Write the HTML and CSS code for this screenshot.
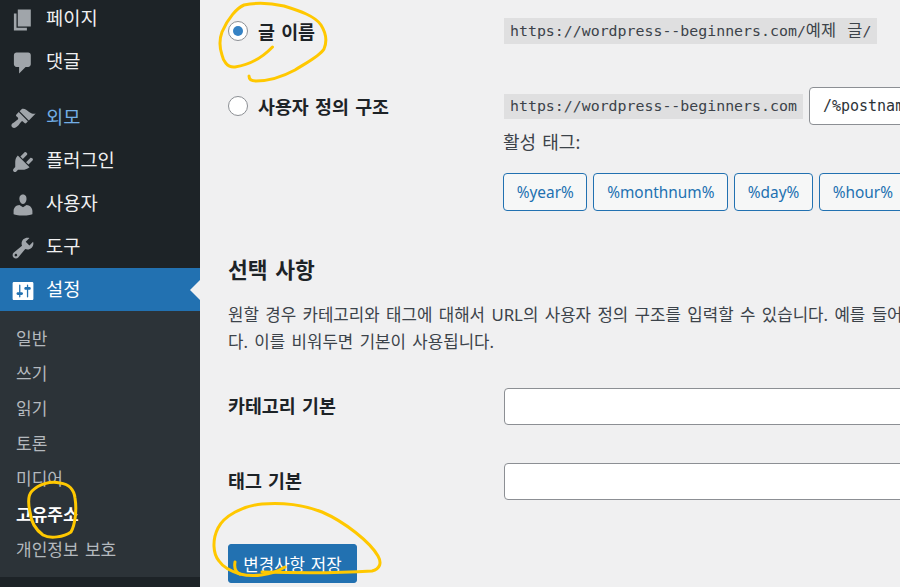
FILE: index.html
```html
<!DOCTYPE html>
<html lang="ko">
<head>
<meta charset="utf-8">
<title>고유주소 설정</title>
<link rel="stylesheet" href="styles.css">
</head>
<body>
<div class="page">
  <nav class="sidebar">
    <ul class="menu">
      <li class="item"><svg class="icon" viewBox="0 0 20 20"><path d="M6 15V2h10v13H6zm-1 1h8v2H3V5h2v11z"/></svg>페이지</li>
      <li class="item"><svg class="icon" viewBox="0 0 20 20"><path d="M5 2h9c1.1 0 2 .9 2 2v7c0 1.1-.9 2-2 2h-2l-5 5v-5H5c-1.100 0-2-.9-2-2V4c0-1.100.9-2 2-2z"/></svg>댓글</li>
      <li class="item item-gap item-hover"><svg class="icon" viewBox="0 0 20 20"><path d="M14.48 11.06L7.41 3.99l1.5-1.5c.5-.56 2.3-.47 3.51.32 1.21.8 1.43 1.28 2.91 2.1 1.18.64 2.45 1.26 4.45.85zm-.71.71L6.7 4.7 4.93 6.47c-.39.39-.39 1.02 0 1.41l1.06 1.06c.39.39.39 1.03 0 1.42-.6.6-1.43 1.11-2.21 1.69-.35.26-.7.53-1.01.84C1.43 13.23.4 14.98 1.72 16.3c1.33 1.33 3.08.3 4.41-1.05.31-.31.58-.66.84-1.01.58-.78 1.09-1.61 1.69-2.21.39-.39 1.03-.39 1.42 0l1.06 1.06c.39.39 1.02.39 1.41 0z"/></svg>외모</li>
      <li class="item"><svg class="icon" viewBox="0 0 20 20"><path d="M13.11 4.36L9.87 7.6 8 5.73l3.24-3.24c.35-.34 1.05-.2 1.56.32.52.51.66 1.21.31 1.55zm-8 1.77l.91-1.12 9.01 9.01-1.19.84c-.71.71-2.63 1.16-3.82 1.16H6.14L4.9 17.26c-.59.59-1.54.59-2.12 0-.59-.58-.59-1.53 0-2.12l1.24-1.24v-3.88c0-1.13.4-3.19 1.09-3.89zm7.26 3.97l3.24-3.24c.34-.35 1.04-.2 1.55.31.52.52.66 1.22.32 1.57l-3.24 3.24z"/></svg>플러그인</li>
      <li class="item"><svg class="icon" viewBox="0 0 20 20"><path d="M10 9.25c-2.27 0-2.73-3.44-2.73-3.44C7 4.02 7.82 2 9.97 2c2.16 0 2.98 2.02 2.71 3.81 0 0-.41 3.44-2.68 3.44zm0 2.57L12.72 10c2.39 0 4.52 2.33 4.52 4.53v2.49s-3.65 1.13-7.24 1.13c-3.65 0-7.24-1.13-7.24-1.13v-2.49c0-2.25 1.94-4.48 4.47-4.48z"/></svg>사용자</li>
      <li class="item"><svg class="icon" viewBox="0 0 20 20"><path d="M16.68 9.77c-1.34 1.34-3.3 1.67-4.95.99l-5.41 6.52c-.99.99-2.59.99-3.58 0s-.99-2.59 0-3.57l6.52-5.42c-.68-1.65-.35-3.61.99-4.95 1.28-1.28 3.12-1.62 4.72-1.06l-2.89 2.89 2.82 2.82 2.86-2.87c.53 1.58.18 3.39-1.08 4.65zM3.81 16.21c.4.39 1.04.39 1.43 0 .4-.4.4-1.04 0-1.43-.39-.4-1.03-.4-1.43 0-.39.39-.39 1.03 0 1.43z"/></svg>도구</li>
      <li class="item item-current"><svg class="icon" viewBox="0 0 20 20"><path fill-rule="evenodd" d="M18 16V4c0-.55-.45-1-1-1H3c-.55 0-1 .45-1 1v12c0 .55.45 1 1 1h14c.55 0 1-.45 1-1zM8 11h1c.55 0 1 .45 1 1s-.45 1-1 1H8v1.5c0 .28-.22.5-.5.5s-.5-.22-.5-.5V13H6c-.55 0-1-.45-1-1s.45-1 1-1h1V5.5c0-.28.22-.5.5-.5s.5.22.5.5V11zm5-2h-1c-.55 0-1-.45-1-1s.45-1 1-1h1V5.5c0-.28.22-.5.5-.5s.5.22.5.5V7h1c.55 0 1 .45 1 1s-.45 1-1 1h-1v5.5c0 .28-.22.5-.5.5s-.5-.22-.5-.5V9z"/></svg>설정</li>
    </ul>
    <ul class="submenu">
      <li>일반</li>
      <li>쓰기</li>
      <li>읽기</li>
      <li>토론</li>
      <li>미디어</li>
      <li class="sub-current">고유주소</li>
      <li>개인정보 보호</li>
    </ul>
  </nav>
  <main class="content">
    <div class="row row-name">
      <label class="choice"><span class="radio radio-on"></span>글 이름</label>
      <div class="value"><code>https://wordpress--beginners.com/<span class="code-ko">예제 글</span>/</code></div>
    </div>
    <div class="row row-custom">
      <label class="choice"><span class="radio"></span>사용자 정의 구조</label>
      <div class="value">
        <code>https://wordpress--beginners.com</code>
        <input class="structure" type="text" value="/%postname%/">
      </div>
    </div>
    <div class="tags">
      <p class="tags-title">활성 태그:</p>
      <div class="tag-list">
        <button class="tag">%year%</button>
        <button class="tag">%monthnum%</button>
        <button class="tag">%day%</button>
        <button class="tag">%hour%</button>
      </div>
    </div>
    <h2 class="heading">선택 사항</h2>
    <p class="desc">원할 경우 카테고리와 태그에 대해서 URL의 사용자 정의 구조를 입력할 수 있습니다. 예를 들어, 카테고리 링크에 topics를 기본값으로 사용할 수 있습니<br>다. 이를 비워두면 기본이 사용됩니다.</p>
    <div class="field field-cat">
      <label class="field-label">카테고리 기본</label>
      <input class="field-input" type="text">
    </div>
    <div class="field field-tag">
      <label class="field-label">태그 기본</label>
      <input class="field-input" type="text">
    </div>
    <button class="save">변경사항 저장</button>
  </main>
  <svg class="marks" viewBox="0 0 900 587" fill="none">
    <path d="M272.5 47C262 58 248 65 235 67C227 68 223 60 222 55C219 46 219 40 222 32C228 18 237 8 244 5C258 2 270 3 284 6C300 11 315 16 321 25C326 33 327 42 324 49C320 56 306 63 295 70C282 77 268 81 256 81C251 81 249 79 249 76"/>
    <path d="M60 483C69 484 74 490 75 498C77 510 75 525 71 532C64 537 50 539 43 535C36 530 31 522 30 512C28 503 28 495 32 491C39 484 50 481 60 483Z"/>
    <path d="M235 562C234 568 235 572 240 574C252 577 270 576 285 567"/>
    <path d="M262 572C295 573 340 573 372 571C380 569 382 563 378 556C370 542 345 522 322 512C305 505 282 502 262 504C242 506 224 516 218 528C212 540 213 554 219 561C223 567 230 571 240 574"/>
  </svg>
</div>
</body>
</html>
```
FILE: styles.css
```css
* { box-sizing: border-box; }
html, body { margin: 0; padding: 0; height: 587px; overflow: hidden; }
body {
  background: #f0f0f1;
  color: #3c434a;
  font-family: "Noto Sans", "Noto Sans CJK KR", sans-serif;
}
.page { position: relative; display: flex; width: 900px; height: 587px; overflow: hidden; }

/* Sidebar */
.sidebar { flex: 0 0 200px; background: #1d2327; color: #f0f0f1; }
.menu, .submenu { list-style: none; margin: 0; padding: 0; }
.menu { margin-top: -3px; }
.item {
  display: flex;
  align-items: center;
  gap: 10px;
  height: 43px;
  padding: 0 0 5px 10px;
  font-size: 18.7px;
}
.item-gap { margin-top: 13px; }
.item-hover { color: #72aee6; }
.item-current { position: relative; background: #2271b1; color: #fff; }
.item-current::after {
  content: "";
  position: absolute;
  right: 0;
  top: 12px;
  border: 10px solid transparent;
  border-right-color: #f0f0f1;
  border-left-width: 0;
}
.icon { flex: 0 0 26px; width: 26px; height: 26px; margin-top: 7px; fill: #a0a5aa; }
.item-current .icon { fill: #fff; }
.submenu { background: #2c3338; height: 266px; padding-top: 8.5px; color: #b4b9be; font-size: 17px; }
.submenu li { display: flex; align-items: center; height: 35.2px; padding-left: 16px; word-spacing: 2px; }
.submenu .sub-current { color: #fff; font-weight: 700; }

/* Content */
.content { flex: 1 1 auto; min-width: 0; padding: 18px 0 0 28px; }
.row { display: grid; grid-template-columns: 276px 1fr; align-items: center; }
.row-name { height: 26px; }
.row-custom { height: 38px; margin-top: 43px; }
.choice {
  display: flex;
  align-items: center;
  gap: 10px;
  font-size: 18.4px;
  font-weight: 700;
  word-spacing: 1.5px;
  color: #1d2327;
  white-space: nowrap;
}
.radio {
  flex: 0 0 20px;
  width: 20px;
  height: 20px;
  border: 1px solid #8c8f94;
  border-radius: 50%;
  background: #fff;
  display: flex;
  align-items: center;
  justify-content: center;
}
.radio-on::before {
  content: "";
  width: 10px;
  height: 10px;
  border-radius: 50%;
  background: #3582c4;
}
.value { display: flex; align-items: center; gap: 6px; white-space: nowrap; }
code {
  display: inline-block;
  padding: 0 6px;
  background: #dfdfe0;
  color: #3c434a;
  font-family: "DejaVu Sans Mono", "Noto Sans CJK KR", monospace;
  font-size: 14.9px;
  line-height: 25px;
}
.code-ko { font-size: 16.4px; word-spacing: 1.5px; }
.row-name code { line-height: 26px; }
.structure {
  flex: 0 0 300px;
  width: 300px;
  height: 38px;
  padding: 0 13px;
  border: 1px solid #8c8f94;
  border-radius: 4px;
  background: #fff;
  color: #2c3338;
  font-family: "DejaVu Sans Mono", monospace;
  font-size: 15px;
}
.tags { margin-left: 275px; }
.tags-title { margin: 5px 0 0; font-size: 18px; line-height: 24px; word-spacing: 1.5px; }
.tag-list { display: flex; gap: 6px; margin-top: 19px; }
.tag {
  flex: none;
  height: 38px;
  padding: 0 12.7px;
  border: 1px solid #2271b1;
  border-radius: 4px;
  background: #f6f7f7;
  color: #2271b1;
  font-family: inherit;
  font-size: 15.4px;
}
.heading { margin: 47px 0 0; font-size: 21.5px; line-height: 24px; font-weight: 700; word-spacing: 2px; color: #1d2327; }
.desc { margin: 19px 0 0; font-size: 16.8px; line-height: 27px; word-spacing: 2px; white-space: nowrap; }
.field { display: grid; grid-template-columns: 276px 1fr; align-items: center; height: 37px; }
.field-cat { margin-top: 33px; }
.field-tag { margin-top: 38px; }
.field-label { padding-bottom: 3px; font-size: 18.4px; font-weight: 700; word-spacing: 1.5px; color: #1d2327; }
.field-input { width: 500px; height: 37px; border: 1px solid #8c8f94; border-radius: 4px; background: #fff; }
.save {
  display: block;
  width: 129px;
  height: 39px;
  margin-top: 44px;
  border: 1px solid #2271b1;
  border-radius: 3px;
  background: #2271b1;
  color: #fff;
  font-family: inherit;
  font-size: 16.8px;
  word-spacing: 1.5px;
}

/* Hand-drawn highlight strokes over the screenshot */
.marks { position: absolute; inset: 0; width: 900px; height: 587px; pointer-events: none; }
.marks path { stroke: #ffc800; stroke-width: 3; stroke-linecap: round; stroke-linejoin: round; }
```
